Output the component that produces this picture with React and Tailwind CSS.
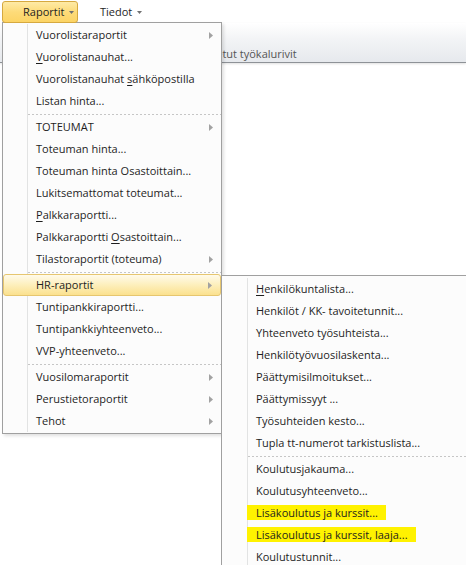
import React from 'react';

const mainItems = [
    { label: 'Vuorolistaraportit', sub: true },
    { label: '&Vuorolistanauhat...' },
    { label: 'Vuorolistanauhat &sähköpostilla' },
    { label: 'Listan hinta...' },
    { sep: true },
    { label: 'TOTEUMAT', sub: true },
    { label: 'Toteuman hinta...' },
    { label: 'Toteuman hinta Osastoittain...' },
    { label: 'Lukitsemattomat toteumat...' },
    { label: '&Palkkaraportti...' },
    { label: 'Palkkaraportti &Osastoittain...' },
    { label: 'Tilastoraportit (toteuma)', sub: true },
    { sep: true },
    { label: 'HR-raportit', sub: true, active: true },
    { label: 'Tuntipankkiraportti...' },
    { label: 'Tuntipankkiyhteenveto...' },
    { label: 'VVP-yhteenveto...' },
    { sep: true },
    { label: 'Vuosilomaraportit', sub: true },
    { label: 'Perustietoraportit', sub: true },
    { label: 'Tehot', sub: true },
];

const hrItems = [
    { label: '&Henkilökuntalista...' },
    { label: 'Henkilöt / KK- tavoitetunnit...' },
    { label: 'Yhteenveto työsuhteista...' },
    { label: 'Henkilötyövuosilaskenta...' },
    { label: 'Päättymisilmoitukset...' },
    { label: 'Päättymissyyt ...' },
    { label: 'Työsuhteiden kesto...' },
    { label: 'Tupla tt-numerot tarkistuslista...' },
    { sep: true },
    { label: 'Koulutusjakauma...' },
    { label: 'Koulutusyhteenveto...' },
    { label: 'Lisäkoulutus ja kurssit...', marked: true },
    { label: 'Lisäkoulutus ja kurssit, laaja...', marked: true },
    { label: 'Koulutustunnit...' },
];

// '&' marks the access key, like in Windows menus
const Label = ({ text }) => {
    const i = text.indexOf('&');
    if (i < 0) return text;
    return (
        <>
            {text.slice(0, i)}
            <span className="underline decoration-1 underline-offset-[2px]">{text[i + 1]}</span>
            {text.slice(i + 2)}
        </>
    );
};

const SubArrow = () => (
    <svg width="4" height="7" viewBox="0 0 4 7" className="mr-[8px] shrink-0">
        <polygon points="0,0 4,3.5 0,7" fill="#a2a2a2" />
    </svg>
);

const DownArrow = () => (
    <svg width="5" height="3" viewBox="0 0 5 3" className="ml-[5px] mt-[1px]">
        <polygon points="0,0 5,0 2.5,3" fill="#707070" />
    </svg>
);

const MenuRow = ({ item, gutter }) => {
    if (item.sep) {
        return (
            <div className="flex h-[4px]">
                <div className={`${gutter} shrink-0 border-r border-[#e2e3e3]`} />
                <div className="flex flex-1 items-center">
                    <div className="h-px w-full bg-[repeating-linear-gradient(90deg,#c6c6c6_0_2px,transparent_2px_4px)]" />
                </div>
            </div>
        );
    }

    if (item.active) {
        return (
            <div className="flex h-[22px] items-center rounded-[3px] border border-[#e6c66f] bg-[linear-gradient(to_bottom,#fffaea,#fdf0c0_45%,#fbe18e)]">
                <div className="w-[24px] shrink-0 self-stretch" />
                <span className="flex-1 pl-[8px]">{item.label}</span>
                {item.sub && <SubArrow />}
            </div>
        );
    }

    return (
        <div className="flex h-[22px] items-center">
            <div className={`${gutter} shrink-0 self-stretch border-r border-[#e2e3e3]`} />
            <span className="flex-1 pl-[8px]">
                {item.marked ? (
                    <span className="-ml-[9px] bg-[#fff200] pl-[9px] pr-[8px] leading-[13px]">
                        <Label text={item.label} />
                    </span>
                ) : (
                    <Label text={item.label} />
                )}
            </span>
            {item.sub && <SubArrow />}
        </div>
    );
};

export default function App() {
    return (
        <div className="relative h-[565px] w-[466px] overflow-hidden bg-white text-[11px] text-[#1e1e1e] font-['Segoe_UI','Open_Sans',sans-serif]">
            {/* menu bar */}
            <div className="flex h-[23px] items-start pl-[2px] pt-[1px]">
                <div className="relative z-20 flex h-[22px] w-[76px] items-center rounded-[3px] border border-[#d6a93f] bg-[linear-gradient(to_bottom,#feeaa6,#fddb79_50%,#fcd465)] pl-[20px]">
                    <span>Raportit</span>
                    <DownArrow />
                </div>
                <div className="flex h-[22px] items-center pl-[22px]">
                    <span>Tiedot</span>
                    <DownArrow />
                </div>
            </div>

            {/* ribbon strip behind the menu */}
            <div className="flex h-[40px] items-end border-b border-[#8e9297] bg-[linear-gradient(to_bottom,#ffffff,#f3f4f6_40%,#e6e9ed)] pl-[177px] shadow-[0_1px_2px_rgba(0,0,0,0.12)]">
                <span className="text-[#555]">Mukautetut työkalurivit</span>
            </div>

            {/* Raportit dropdown */}
            <div className="absolute left-[2px] top-[22px] z-10 w-[220px] border border-[#a0a0a0] bg-[#fcfcfc] py-[1px] shadow-[2px_2px_3px_rgba(0,0,0,0.12)]">
                {mainItems.map((item, i) => (
                    <MenuRow key={i} item={item} gutter="w-[25px]" />
                ))}
            </div>

            {/* HR-raportit submenu */}
            <div className="absolute left-[221px] top-[275px] z-30 w-[260px] border border-[#a0a0a0] bg-[#fcfcfc] pt-[2px]">
                {hrItems.map((item, i) => (
                    <MenuRow key={i} item={item} gutter="w-[26px]" />
                ))}
            </div>
        </div>
    );
}
